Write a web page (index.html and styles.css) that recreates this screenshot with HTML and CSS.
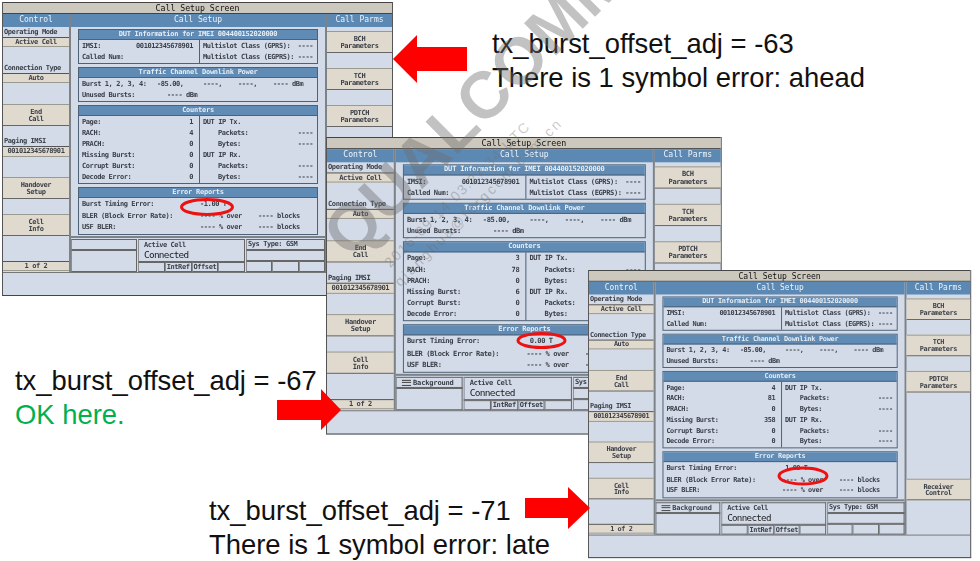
FILE: index.html
```html
<!DOCTYPE html>
<html lang="en">
<head>
    <meta charset="UTF-8">
    <title>Call Setup Screen</title>
    <link rel="stylesheet" href="styles.css">
</head>
<body>
<div class="slide">

    <!-- First screen: offset -63 -->
    <div class="win win-1">
        <div class="win-title">Call Setup Screen</div>
        <div class="win-body">
            <div class="col-left">
                <div class="col-head">Control</div>
                <div class="lbl">Operating Mode</div>
                <div class="val">Active Cell</div>
                <div class="gap-16"></div>
                <div class="lbl">Connection Type</div>
                <div class="val">Auto</div>
                <div class="gap-21"></div>
                <div class="key">End<br>Call</div>
                <div class="gap-10"></div>
                <div class="lbl">Paging IMSI</div>
                <div class="val val-tall">001012345678901</div>
                <div class="gap-20"></div>
                <div class="key">Handover<br>Setup</div>
                <div class="gap-15"></div>
                <div class="key">Cell<br>Info</div>
                <div class="gap-25"></div>
                <div class="val">1 of 2</div>
            </div>
            <div class="col-mid">
                <div class="col-head">Call Setup</div>
                <div class="panel">
                    <div class="sec">
                        <div class="sec-head">DUT Information for IMEI 004400152020000</div>
                        <div class="split">
                            <div>
                                <div class="row"><span>IMSI:</span><span>001012345678901</span></div>
                                <div class="row"><span>Called Num:</span></div>
                            </div>
                            <div>
                                <div class="row"><span>Multislot Class (GPRS):</span><span>----</span></div>
                                <div class="row"><span>Multislot Class (EGPRS):</span><span>----</span></div>
                            </div>
                        </div>
                    </div>
                    <div class="sec">
                        <div class="sec-head">Traffic Channel Downlink Power</div>
                        <div class="sec-body">
                            <div class="power"><span>Burst 1, 2, 3, 4:</span><span>-85.00,</span><span>----,</span><span>----,</span><span>---- dBm</span></div>
                            <div class="power-2"><span>Unused Bursts:</span><span>---- dBm</span></div>
                        </div>
                    </div>
                    <div class="sec">
                        <div class="sec-head">Counters</div>
                        <div class="split">
                            <div>
                                <div class="row"><span>Page:</span><span>1</span></div>
                                <div class="row"><span>RACH:</span><span>4</span></div>
                                <div class="row"><span>PRACH:</span><span>0</span></div>
                                <div class="row"><span>Missing Burst:</span><span>0</span></div>
                                <div class="row"><span>Corrupt Burst:</span><span>0</span></div>
                                <div class="row"><span>Decode Error:</span><span>0</span></div>
                            </div>
                            <div>
                                <div class="row"><span>DUT IP Tx.</span></div>
                                <div class="row indent"><span>Packets:</span><span>----</span></div>
                                <div class="row indent"><span>Bytes:</span><span>----</span></div>
                                <div class="row"><span>DUT IP Rx.</span></div>
                                <div class="row indent"><span>Packets:</span><span>----</span></div>
                                <div class="row indent"><span>Bytes:</span><span>----</span></div>
                            </div>
                        </div>
                    </div>
                    <div class="sec">
                        <div class="sec-head">Error Reports</div>
                        <div class="sec-body">
                            <div class="err"><span>Burst Timing Error:</span><span class="err-num">-1.00 T</span></div>
                            <div class="err"><span>BLER (Block Error Rate):</span><span>---- % over</span><span>---- blocks</span></div>
                            <div class="err"><span>USF BLER:</span><span>---- % over</span><span>---- blocks</span></div>
                        </div>
                    </div>
                </div>
                <div class="status">
                    <div class="st-stack">
                        <div class="box box-top"></div>
                        <div class="box box-fill"></div>
                    </div>
                    <div class="st-stack">
                        <div class="box box-cell">Active Cell<div class="big">Connected</div></div>
                        <div class="st-cells"><div class="box"></div><div class="box">IntRef</div><div class="box">Offset</div><div class="box"></div></div>
                    </div>
                    <div class="st-stack">
                        <div class="box box-top">Sys Type: GSM</div>
                        <div class="box box-top"></div>
                        <div class="st-cells"><div class="box"></div><div class="box"></div><div class="box"></div></div>
                    </div>
                </div>
            </div>
            <div class="col-right">
                <div class="col-head">Call Parms</div>
                <div class="key">BCH<br>Parameters</div>
                <div class="key">TCH<br>Parameters</div>
                <div class="key">PDTCH<br>Parameters</div>
            </div>
        </div>
        <div class="win-foot"></div>
    </div>

    <!-- Second screen: offset -67 -->
    <div class="win win-2">
        <div class="win-title">Call Setup Screen</div>
        <div class="win-body">
            <div class="col-left">
                <div class="col-head">Control</div>
                <div class="lbl">Operating Mode</div>
                <div class="val">Active Cell</div>
                <div class="gap-16"></div>
                <div class="lbl">Connection Type</div>
                <div class="val">Auto</div>
                <div class="gap-21"></div>
                <div class="key">End<br>Call</div>
                <div class="gap-10"></div>
                <div class="lbl">Paging IMSI</div>
                <div class="val val-tall">001012345678901</div>
                <div class="gap-20"></div>
                <div class="key">Handover<br>Setup</div>
                <div class="gap-15"></div>
                <div class="key">Cell<br>Info</div>
                <div class="gap-25"></div>
                <div class="val">1 of 2</div>
            </div>
            <div class="col-mid">
                <div class="col-head">Call Setup</div>
                <div class="panel">
                    <div class="sec">
                        <div class="sec-head">DUT Information for IMEI 004400152020000</div>
                        <div class="split">
                            <div>
                                <div class="row"><span>IMSI:</span><span>001012345678901</span></div>
                                <div class="row"><span>Called Num:</span></div>
                            </div>
                            <div>
                                <div class="row"><span>Multislot Class (GPRS):</span><span>----</span></div>
                                <div class="row"><span>Multislot Class (EGPRS):</span><span>----</span></div>
                            </div>
                        </div>
                    </div>
                    <div class="sec">
                        <div class="sec-head">Traffic Channel Downlink Power</div>
                        <div class="sec-body">
                            <div class="power"><span>Burst 1, 2, 3, 4:</span><span>-85.00,</span><span>----,</span><span>----,</span><span>---- dBm</span></div>
                            <div class="power-2"><span>Unused Bursts:</span><span>---- dBm</span></div>
                        </div>
                    </div>
                    <div class="sec">
                        <div class="sec-head">Counters</div>
                        <div class="split">
                            <div>
                                <div class="row"><span>Page:</span><span>3</span></div>
                                <div class="row"><span>RACH:</span><span>78</span></div>
                                <div class="row"><span>PRACH:</span><span>0</span></div>
                                <div class="row"><span>Missing Burst:</span><span>6</span></div>
                                <div class="row"><span>Corrupt Burst:</span><span>0</span></div>
                                <div class="row"><span>Decode Error:</span><span>0</span></div>
                            </div>
                            <div>
                                <div class="row"><span>DUT IP Tx.</span></div>
                                <div class="row indent"><span>Packets:</span><span>----</span></div>
                                <div class="row indent"><span>Bytes:</span><span>----</span></div>
                                <div class="row"><span>DUT IP Rx.</span></div>
                                <div class="row indent"><span>Packets:</span><span>----</span></div>
                                <div class="row indent"><span>Bytes:</span><span>----</span></div>
                            </div>
                        </div>
                    </div>
                    <div class="sec">
                        <div class="sec-head">Error Reports</div>
                        <div class="sec-body">
                            <div class="err"><span>Burst Timing Error:</span><span class="err-num">0.00 T</span></div>
                            <div class="err"><span>BLER (Block Error Rate):</span><span>---- % over</span><span>---- blocks</span></div>
                            <div class="err"><span>USF BLER:</span><span>---- % over</span><span>---- blocks</span></div>
                        </div>
                    </div>
                </div>
                <div class="status">
                    <div class="st-stack">
                        <div class="box box-top box-bg"><span class="bg-icon"></span>Background</div>
                        <div class="box box-fill"></div>
                    </div>
                    <div class="st-stack">
                        <div class="box box-cell">Active Cell<div class="big">Connected</div></div>
                        <div class="st-cells"><div class="box"></div><div class="box">IntRef</div><div class="box">Offset</div><div class="box"></div></div>
                    </div>
                    <div class="st-stack">
                        <div class="box box-top">Sys Type: GSM</div>
                        <div class="box box-top"></div>
                        <div class="st-cells"><div class="box"></div><div class="box"></div><div class="box"></div></div>
                    </div>
                </div>
            </div>
            <div class="col-right">
                <div class="col-head">Call Parms</div>
                <div class="key">BCH<br>Parameters</div>
                <div class="key">TCH<br>Parameters</div>
                <div class="key">PDTCH<br>Parameters</div>
            </div>
        </div>
        <div class="win-foot"></div>
    </div>

    <!-- Third screen: offset -71 -->
    <div class="win win-3">
        <div class="win-title">Call Setup Screen</div>
        <div class="win-body">
            <div class="col-left">
                <div class="col-head">Control</div>
                <div class="lbl">Operating Mode</div>
                <div class="val">Active Cell</div>
                <div class="gap-16"></div>
                <div class="lbl">Connection Type</div>
                <div class="val">Auto</div>
                <div class="gap-21"></div>
                <div class="key">End<br>Call</div>
                <div class="gap-10"></div>
                <div class="lbl">Paging IMSI</div>
                <div class="val val-tall">001012345678901</div>
                <div class="gap-20"></div>
                <div class="key">Handover<br>Setup</div>
                <div class="gap-15"></div>
                <div class="key">Cell<br>Info</div>
                <div class="gap-25"></div>
                <div class="val">1 of 2</div>
            </div>
            <div class="col-mid">
                <div class="col-head">Call Setup</div>
                <div class="panel">
                    <div class="sec">
                        <div class="sec-head">DUT Information for IMEI 004400152020000</div>
                        <div class="split">
                            <div>
                                <div class="row"><span>IMSI:</span><span>001012345678901</span></div>
                                <div class="row"><span>Called Num:</span></div>
                            </div>
                            <div>
                                <div class="row"><span>Multislot Class (GPRS):</span><span>----</span></div>
                                <div class="row"><span>Multislot Class (EGPRS):</span><span>----</span></div>
                            </div>
                        </div>
                    </div>
                    <div class="sec">
                        <div class="sec-head">Traffic Channel Downlink Power</div>
                        <div class="sec-body">
                            <div class="power"><span>Burst 1, 2, 3, 4:</span><span>-85.00,</span><span>----,</span><span>----,</span><span>---- dBm</span></div>
                            <div class="power-2"><span>Unused Bursts:</span><span>---- dBm</span></div>
                        </div>
                    </div>
                    <div class="sec">
                        <div class="sec-head">Counters</div>
                        <div class="split">
                            <div>
                                <div class="row"><span>Page:</span><span>4</span></div>
                                <div class="row"><span>RACH:</span><span>81</span></div>
                                <div class="row"><span>PRACH:</span><span>0</span></div>
                                <div class="row"><span>Missing Burst:</span><span>358</span></div>
                                <div class="row"><span>Corrupt Burst:</span><span>0</span></div>
                                <div class="row"><span>Decode Error:</span><span>0</span></div>
                            </div>
                            <div>
                                <div class="row"><span>DUT IP Tx.</span></div>
                                <div class="row indent"><span>Packets:</span><span>----</span></div>
                                <div class="row indent"><span>Bytes:</span><span>----</span></div>
                                <div class="row"><span>DUT IP Rx.</span></div>
                                <div class="row indent"><span>Packets:</span><span>----</span></div>
                                <div class="row indent"><span>Bytes:</span><span>----</span></div>
                            </div>
                        </div>
                    </div>
                    <div class="sec">
                        <div class="sec-head">Error Reports</div>
                        <div class="sec-body">
                            <div class="err"><span>Burst Timing Error:</span><span class="err-num">1.00 T</span></div>
                            <div class="err"><span>BLER (Block Error Rate):</span><span>---- % over</span><span>---- blocks</span></div>
                            <div class="err"><span>USF BLER:</span><span>---- % over</span><span>---- blocks</span></div>
                        </div>
                    </div>
                </div>
                <div class="status">
                    <div class="st-stack">
                        <div class="box box-top box-bg"><span class="bg-icon"></span>Background</div>
                        <div class="box box-fill"></div>
                    </div>
                    <div class="st-stack">
                        <div class="box box-cell">Active Cell<div class="big">Connected</div></div>
                        <div class="st-cells"><div class="box"></div><div class="box">IntRef</div><div class="box">Offset</div><div class="box"></div></div>
                    </div>
                    <div class="st-stack">
                        <div class="box box-top">Sys Type: GSM</div>
                        <div class="box box-top"></div>
                        <div class="st-cells"><div class="box"></div><div class="box"></div><div class="box"></div></div>
                    </div>
                </div>
            </div>
            <div class="col-right">
                <div class="col-head">Call Parms</div>
                <div class="key">BCH<br>Parameters</div>
                <div class="key">TCH<br>Parameters</div>
                <div class="key">PDTCH<br>Parameters</div>
                <div class="key key-last">Receiver<br>Control</div>
            </div>
        </div>
        <div class="win-foot"></div>
    </div>

    <!-- Arrows and timing error circles drawn over the screens -->
    <svg class="marks" width="980" height="561" viewBox="0 0 980 561">
        <polygon points="393,59 417,35 417,47 467,47 467,71 417,71 417,83" fill="#ff0000"/>
        <polygon points="277,400 321,400 321,389 341,410 321,430 321,420 277,420" fill="#ff0000"/>
        <polygon points="525,498 568,498 568,487 590,508 568,529 568,518 525,518" fill="#ff0000"/>
        <ellipse cx="207" cy="207" rx="25.5" ry="7.5" fill="none" stroke="#ee1111" stroke-width="3"/>
        <ellipse cx="541.5" cy="340.5" rx="23.5" ry="7" fill="none" stroke="#ee1111" stroke-width="3"/>
        <ellipse cx="803" cy="476" rx="24" ry="8" fill="none" stroke="#ee1111" stroke-width="3"/>
    </svg>

    <div class="note note-1">tx_burst_offset_adj = -63<br>There is 1 symbol error: ahead</div>
    <div class="note note-2">tx_burst_offset_adj = -67<br><span class="ok">OK here.</span></div>
    <div class="note note-3">tx_burst_offset_adj = -71<br>There is 1 symbol error: late</div>

    <div class="wm-brand">QUALCOMM</div>
    <div class="wm-small wm-small-1">2016-09-14 03:27:34 UTC</div>
    <div class="wm-small wm-small-2">qianghua@forgcom.com.cn</div>
</div>
</body>
</html>
```

FILE: styles.css
```css
* {
    box-sizing: border-box;
}

body {
    margin: 0;
    background: #ffffff;
    overflow: hidden;
}

.slide {
    position: relative;
    width: 980px;
    height: 561px;
    overflow: hidden;
}

/* Instrument window, drawn at one base size and scaled per copy */
.win {
    position: absolute;
    width: 391px;
    height: 294px;
    display: flex;
    flex-direction: column;
    background: #d3dbe8;
    border-left: 1px solid #555555;
    border-right: 1px solid #555555;
    border-bottom: 1px solid #444444;
    font-family: "DejaVu Sans Mono", "Liberation Mono", monospace;
    font-size: 7px;
    font-weight: 700;
    letter-spacing: -0.42px;
    color: #3a3f48;
    transform-origin: top left;
    filter: blur(0.4px);
}

.win-1 {
    left: 2px;
    top: 2px;
}

.win-2 {
    left: 326px;
    top: 137px;
    transform: scale(1.012);
}

.win-3 {
    left: 588px;
    top: 270px;
    transform: scale(0.98);
}

.win-title {
    height: 12px;
    line-height: 11px;
    flex: none;
    text-align: center;
    background: #cdc8be;
    border-top: 1px solid #444444;
    border-bottom: 1px solid #444444;
    font-size: 8.2px;
    font-weight: 400;
    letter-spacing: 0;
    color: #111111;
}

.win-body {
    height: 259px;
    flex: none;
    display: grid;
    grid-template-columns: 66px 258px 65px;
    border-bottom: 1px solid #777777;
}

.win-foot {
    flex: 1;
}

.col-head {
    height: 13px;
    flex: none;
    line-height: 12px;
    text-align: center;
    background: #5c89b3;
    color: #eef3f8;
    font-size: 8px;
    font-weight: 400;
    letter-spacing: 0;
}

.col-left,
.col-right {
    display: flex;
    flex-direction: column;
}

.col-right {
    gap: 15px;
}

.col-right .col-head {
    margin-bottom: -11px;
}

.key-last {
    margin-top: 73px;
}

.col-mid {
    display: flex;
    flex-direction: column;
    border-left: 2px solid #7d8287;
    border-right: 2px solid #7d8287;
}

.lbl {
    height: 10px;
    flex: none;
    line-height: 10px;
    padding-left: 1px;
    white-space: nowrap;
}

.val {
    height: 10px;
    flex: none;
    line-height: 9px;
    text-align: center;
    background: #e0d9cd;
    border-top: 1px solid #555555;
    border-bottom: 1px solid #9a9a90;
    white-space: nowrap;
}

.val-tall {
    height: 11px;
}

.key {
    height: 22px;
    flex: none;
    padding-top: 4px;
    line-height: 7px;
    text-align: center;
    background: #e0d9cd;
    border-top: 1px solid #9a9a90;
    border-bottom: 1px solid #666666;
}

.gap-10 { height: 10px; flex: none; }
.gap-15 { height: 15px; flex: none; }
.gap-16 { height: 16px; flex: none; }
.gap-20 { height: 20px; flex: none; }
.gap-21 { height: 21px; flex: none; }
.gap-25 { height: 25px; flex: none; }

.panel {
    height: 211px;
    flex: none;
    display: flex;
    flex-direction: column;
    gap: 3px;
    padding: 2px 7px 0;
    border-bottom: 2px solid #7d8287;
}

.sec {
    border: 1px solid #4d6177;
    background: #d3dbe8;
}

.sec-head {
    height: 10px;
    line-height: 9px;
    text-align: center;
    background: #5f8bb5;
    color: #e6edf4;
    letter-spacing: -0.25px;
    border-bottom: 1px solid #4d6177;
}

.sec-body {
    padding: 1px 3px 0;
}

.split {
    display: grid;
    grid-template-columns: 120px 1fr;
}

.split > div {
    padding: 1px 6px 0 3px;
}

.split > div + div {
    border-left: 1px solid #4d6177;
    padding-right: 4px;
}

.row,
.power,
.power-2 {
    height: 11px;
    line-height: 11px;
    white-space: nowrap;
}

.row {
    display: flex;
    justify-content: space-between;
}

.indent {
    padding-left: 15px;
}

.power {
    display: grid;
    grid-template-columns: 75px 46px 35px 35px 1fr;
}

.power-2 {
    display: grid;
    grid-template-columns: 85px 1fr;
}

.err {
    height: 11.5px;
    line-height: 11.5px;
    white-space: nowrap;
    display: grid;
    grid-template-columns: 118px 58px 1fr;
}

.err-num {
    width: 26px;
    text-align: right;
    justify-self: start;
    white-space: nowrap;
}

.status {
    flex: 1;
    display: grid;
    grid-template-columns: 66px 107px 1fr;
    gap: 0 1px;
    padding-top: 1px;
}

.st-stack {
    display: flex;
    flex-direction: column;
}

.box {
    border: 1px solid #666666;
    border-left-color: #8a8f96;
    padding-left: 1px;
    line-height: 8px;
    white-space: nowrap;
    overflow: hidden;
}

.box-top {
    height: 11px;
    flex: none;
}

.box-fill {
    flex: 1;
}

.box-bg {
    display: flex;
    align-items: center;
    gap: 2px;
    letter-spacing: -0.2px;
    padding-left: 5px;
}

.bg-icon {
    width: 9px;
    height: 6px;
    flex: none;
    border-top: 1px solid #444444;
    border-bottom: 1px solid #444444;
    background: linear-gradient(#444444, #444444) center / 100% 1px no-repeat;
}

.box-cell {
    height: 23px;
    flex: none;
    padding: 1px 0 0 5px;
}

.big {
    font-size: 9.4px;
    font-weight: 400;
    line-height: 11px;
    letter-spacing: -0.7px;
    color: #222222;
}

.st-cells {
    display: flex;
    flex: 1;
}

.st-cells .box {
    flex: 1;
    text-align: center;
    padding-left: 0;
}

/* Free canvas overlays */
.marks {
    position: absolute;
    left: 0;
    top: 0;
}

.note {
    position: absolute;
    font-family: "Liberation Sans", Arial, sans-serif;
    font-size: 27.4px;
    line-height: 33.5px;
    color: #111111;
    white-space: nowrap;
}

.note-1 {
    left: 492px;
    top: 27px;
}

.note-2 {
    left: 15px;
    top: 364px;
}

.note-3 {
    left: 209px;
    top: 494px;
}

.ok {
    color: #00b050;
}

.wm-brand {
    position: absolute;
    left: 360px;
    top: 198px;
    font-family: "Liberation Sans", Arial, sans-serif;
    font-weight: 700;
    font-size: 66px;
    line-height: 72px;
    color: rgba(110, 110, 110, 0.42);
    transform: rotate(-45deg);
    transform-origin: left bottom;
    white-space: nowrap;
}

.wm-small {
    position: absolute;
    font-family: "Liberation Sans", Arial, sans-serif;
    font-size: 14px;
    line-height: 17px;
    letter-spacing: 1.6px;
    color: rgba(110, 110, 110, 0.38);
    transform: rotate(-45deg);
    transform-origin: left bottom;
    white-space: nowrap;
}

.wm-small-1 {
    left: 393px;
    top: 254px;
}

.wm-small-2 {
    left: 403px;
    top: 273px;
    letter-spacing: 2.6px;
}
```
